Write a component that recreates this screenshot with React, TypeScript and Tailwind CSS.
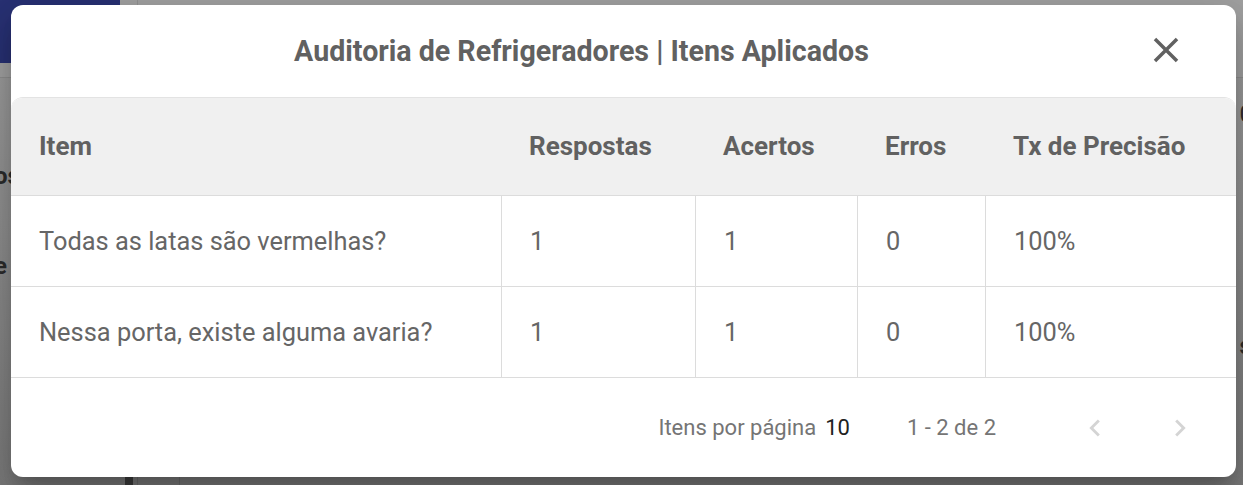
import React from 'react';

const rows = [
  { item: 'Todas as latas são vermelhas?', respostas: 1, acertos: 1, erros: 0, precisao: '100%' },
  { item: 'Nessa porta, existe alguma avaria?', respostas: 1, acertos: 1, erros: 0, precisao: '100%' },
];

const headers = ['Item', 'Respostas', 'Acertos', 'Erros', 'Tx de Precisão'];

const cols = 'grid grid-cols-[490px_194px_162px_128px_1fr]';

function Chevron({ dir }: { dir: 'left' | 'right' }) {
  return (
    <svg width="34" height="34" viewBox="0 0 24 24" fill="currentColor">
      {dir === 'left' ? (
        <path d="M15.41 7.41 14 6l-6 6 6 6 1.41-1.41L10.83 12z" />
      ) : (
        <path d="M10 6 8.59 7.41 13.17 12l-4.58 4.59L10 18l6-6z" />
      )}
    </svg>
  );
}

export default function App() {
  return (
    <div className="relative h-[485px] w-full overflow-hidden bg-[#8a8a8a] font-['Roboto',sans-serif]">
      {/* page behind the backdrop */}
      <div className="flex h-[78px] border-b border-[#8f8f8f] bg-[#a2a2a2]">
        <div className="h-[63px] w-[120px] rounded-br-[12px] bg-[#283174]" />
        <div className="ml-[17px] h-full border-l border-[#929292]" />
      </div>
      <div className="flex h-[407px] flex-col justify-between bg-gradient-to-b from-[#9c9c9c] to-[#7b7b7b]">
        <div className="flex justify-between text-[24px] font-bold text-[#2c2c2c]">
          <div className="mt-[80px] -ml-[6px] flex flex-col gap-[54px]">
            <span>os</span>
            <span>e</span>
          </div>
          <div className="mr-[-10px] flex flex-col gap-[196px] font-normal">
            <span className="mt-[18px]">0</span>
            <span className="font-bold">s</span>
          </div>
        </div>
        <div className="flex h-[9px] pl-[125px]">
          <div className="w-[8px] bg-[#3d3d3d]" />
          <div className="ml-[4px] w-[43px] border-x border-[#6d6d6d]" />
        </div>
      </div>

      {/* dialog */}
      <div className="absolute left-[11px] top-[5px] w-[1225px] rounded-[12px] bg-white shadow-[0_11px_15px_-7px_rgba(0,0,0,0.2),0_24px_38px_3px_rgba(0,0,0,0.14),0_9px_46px_8px_rgba(0,0,0,0.12)]">
        <div className="relative flex h-[92px] items-center justify-center pr-[84px]">
          <h2 className="text-[28.6px] font-bold text-[#616161]">
            Auditoria de Refrigeradores | Itens Aplicados
          </h2>
          <button className="absolute right-[49px] top-[24px] text-[#616161]">
            <svg width="42" height="42" viewBox="0 0 24 24" fill="currentColor">
              <path d="M19 6.41 17.59 5 12 10.59 6.41 5 5 6.41 10.59 12 5 17.59 6.41 19 12 13.41 17.59 19 19 17.59 13.41 12z" />
            </svg>
          </button>
        </div>

        <div className="rounded-t-[12px] border-t border-[#e3e3e3]">
          <div className={`${cols} h-[98px] items-center rounded-t-[12px] border-b border-[#dcdcdc] bg-[#f0f0f0] text-[26px] font-bold text-[#616161]`}>
            {headers.map((h) => (
              <div key={h} className="pl-[28px]">
                {h}
              </div>
            ))}
          </div>
          {rows.map((r, i) => (
            <div key={i} className={`${cols} h-[91px] border-b border-[#dcdcdc] text-[25.4px] text-[#666666]`}>
              <div className="flex items-center pl-[28px]">{r.item}</div>
              <div className="flex items-center border-l border-[#dcdcdc] pl-[28px]">{r.respostas}</div>
              <div className="flex items-center border-l border-[#dcdcdc] pl-[28px]">{r.acertos}</div>
              <div className="flex items-center border-l border-[#dcdcdc] pl-[28px]">{r.erros}</div>
              <div className="flex items-center border-l border-[#dcdcdc] pl-[28px]">{r.precisao}</div>
            </div>
          ))}
        </div>

        <div className="flex h-[99px] items-center justify-end pr-[36px] text-[22px] text-[#757575]">
          <span>Itens por página</span>
          <span className="ml-[9px] text-[#212121]">10</span>
          <span className="ml-[57px]">1 - 2 de 2</span>
          <div className="ml-[79px] flex gap-[45px] text-[#d4d4d4]">
            <button className="flex h-[40px] w-[40px] items-center justify-center">
              <Chevron dir="left" />
            </button>
            <button className="flex h-[40px] w-[40px] items-center justify-center">
              <Chevron dir="right" />
            </button>
          </div>
        </div>
      </div>
    </div>
  );
}
